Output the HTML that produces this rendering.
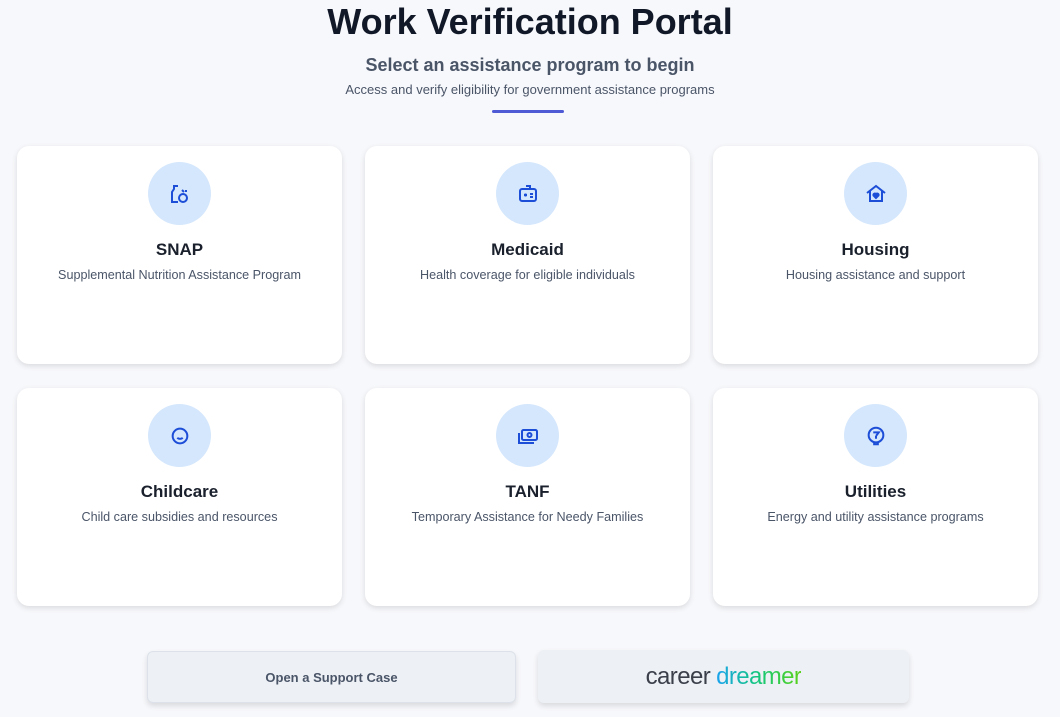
<!DOCTYPE html>
<html><head><meta charset="utf-8"><style>
*{margin:0;padding:0;box-sizing:border-box}
body{width:1060px;height:717px;background:#f7f8fb;font-family:"Liberation Sans",sans-serif;position:relative;overflow:hidden;color:#1a202c}
h1{position:absolute;top:0;left:0;width:1060px;text-align:center;font-size:36px;font-weight:bold;color:#111827;line-height:44px}
.sub{position:absolute;top:55px;width:1060px;text-align:center;font-size:18px;color:#4a5568;font-weight:bold}
.desc{position:absolute;top:82px;width:1060px;text-align:center;font-size:13px;color:#4a5568}
.line{position:absolute;left:492px;top:110px;width:72px;height:3px;background:#4f5bd5;border-radius:2px}
.card{position:absolute;width:325px;height:218px;background:#fff;border-radius:12px;box-shadow:0 2px 6px rgba(0,0,0,.12);text-align:center}
.ic{position:absolute;left:131px;top:16px;width:63px;height:63px;border-radius:50%;background:#d5e7fc;display:flex;align-items:center;justify-content:center}
.t{position:absolute;top:94px;width:100%;font-size:17px;font-weight:bold;color:#1a202c}
.d{position:absolute;top:122px;width:100%;font-size:12.6px;color:#4a5568}
.btn{position:absolute;border-radius:6px;background:#edf0f5;box-shadow:0 3px 6px rgba(0,0,0,.12);display:flex;align-items:center;justify-content:center}
</style></head><body>
<h1>Work Verification Portal</h1>
<div class="sub">Select an assistance program to begin</div>
<div class="desc">Access and verify eligibility for government assistance programs</div>
<div class="line"></div>

<div class="card" style="left:17px;top:146px"><div class="ic"><svg width="24" height="24" viewBox="0 0 24 24" fill="none" stroke="#1d4ed8" stroke-width="2"><path d="M5 4h5M6 4v3L4 10v10h6"/><circle cx="15" cy="16" r="4"/><path d="M14 8l2 2M18 8v2"/></svg></div><div class="t">SNAP</div><div class="d">Supplemental Nutrition Assistance Program</div></div>
<div class="card" style="left:365px;top:146px"><div class="ic"><svg width="24" height="24" viewBox="0 0 24 24" fill="none" stroke="#1d4ed8" stroke-width="2"><rect x="4" y="7" width="16" height="12" rx="2"/><path d="M10 4h4v3M8 13h3M9.5 11.5v3M14 12h3M14 15h3"/></svg></div><div class="t">Medicaid</div><div class="d">Health coverage for eligible individuals</div></div>
<div class="card" style="left:713px;top:146px"><div class="ic"><svg width="24" height="24" viewBox="0 0 24 24" fill="none" stroke="#1d4ed8" stroke-width="2"><path d="M3 11l9-7 9 7M6 9v10h12V9"/><path d="M12 16l-2.5-2.5a1.5 1.5 0 012.5-1.5 1.5 1.5 0 012.5 1.5z" fill="#1d4ed8"/></svg></div><div class="t">Housing</div><div class="d">Housing assistance and support</div></div>
<div class="card" style="left:17px;top:388px"><div class="ic"><svg width="22" height="22" viewBox="0 0 24 24" fill="none" stroke="#1d4ed8" stroke-width="2.2"><circle cx="12" cy="12" r="8"/><path d="M9 14c1.5 1.5 4.5 1.5 6 0M9 10h.01M15 10h.01"/></svg></div><div class="t">Childcare</div><div class="d">Child care subsidies and resources</div></div>
<div class="card" style="left:365px;top:388px"><div class="ic"><svg width="24" height="24" viewBox="0 0 24 24" fill="none" stroke="#1d4ed8" stroke-width="2"><rect x="6" y="6" width="15" height="10" rx="1.5"/><circle cx="13.5" cy="11" r="2"/><path d="M3 9v10h15"/></svg></div><div class="t">TANF</div><div class="d">Temporary Assistance for Needy Families</div></div>
<div class="card" style="left:713px;top:388px"><div class="ic"><svg width="22" height="22" viewBox="0 0 24 24" fill="none" stroke="#1d4ed8" stroke-width="2.2"><circle cx="12" cy="11" r="8"/><path d="M9 8h6l-3 4M12 12v3M10 19v2h4v-2"/></svg></div><div class="t">Utilities</div><div class="d">Energy and utility assistance programs</div></div>

<div class="btn" style="left:147px;top:651px;width:369px;height:52px;border:1px solid #dde2ea;font-size:13px;font-weight:bold;color:#4a5568">Open a Support Case</div>
<div class="btn" style="left:538px;top:650px;width:371px;height:53px;font-size:24px;letter-spacing:-0.6px"><span style="color:#3a3f4a">career&nbsp;</span><span style="background:linear-gradient(90deg,#1aa3f0,#14c77a,#5ad21a);-webkit-background-clip:text;background-clip:text;color:transparent">dreamer</span></div>
</body></html>
